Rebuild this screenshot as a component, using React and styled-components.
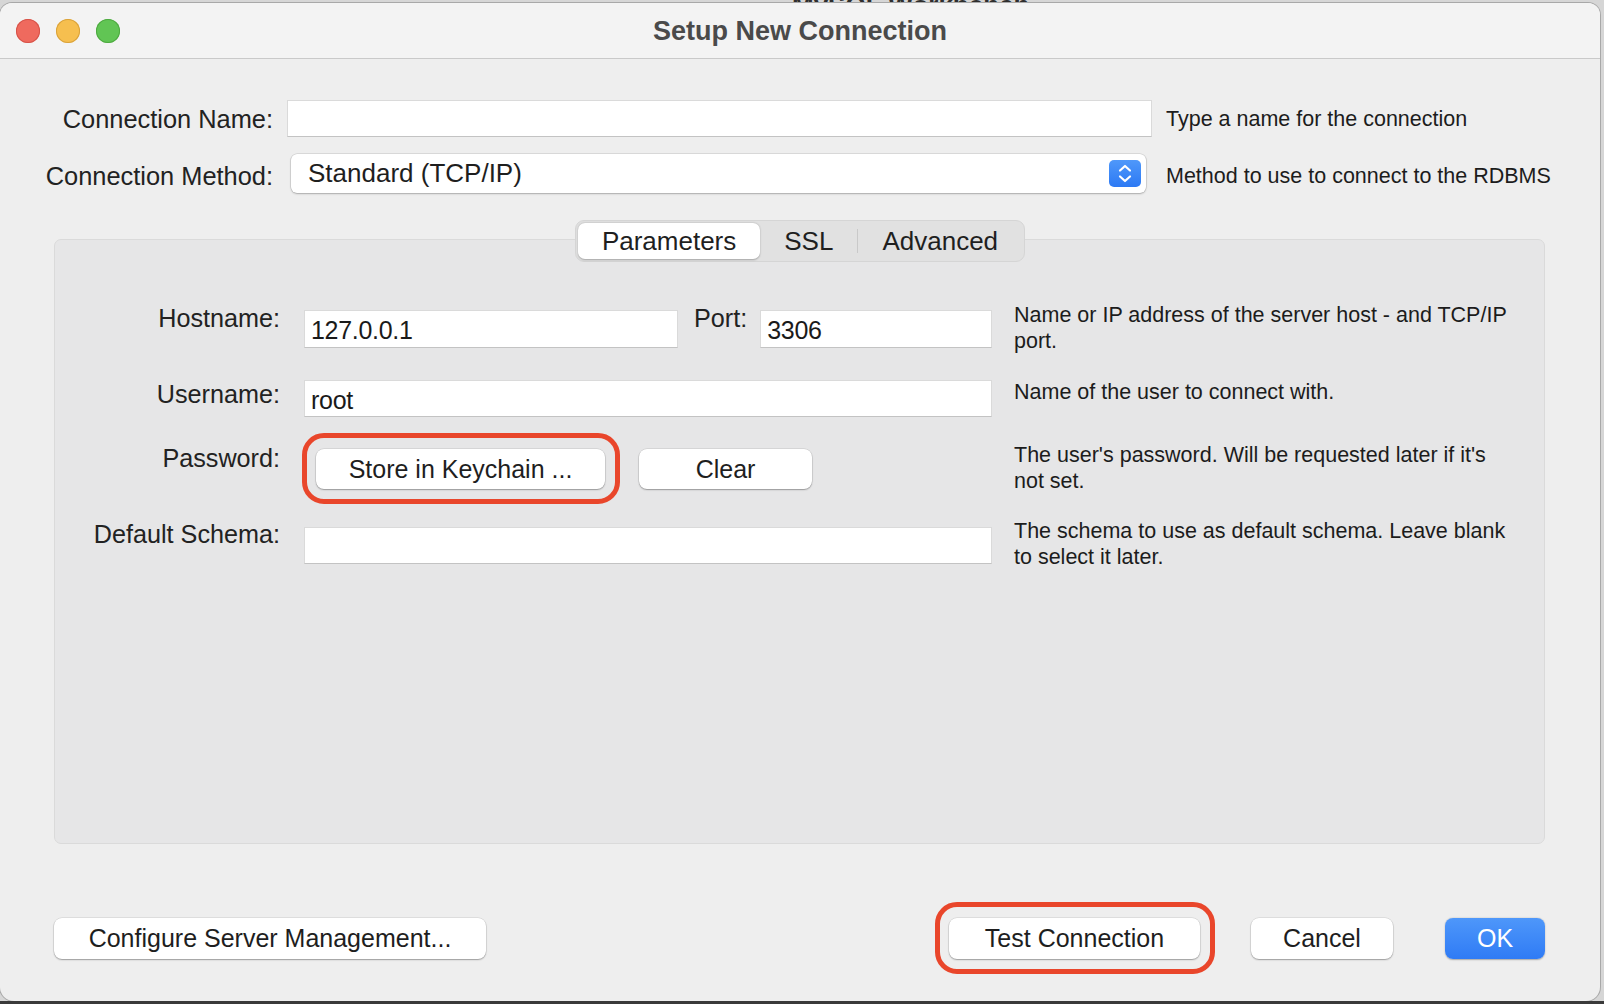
import React from 'react'
import styled, { createGlobalStyle } from 'styled-components'

const GlobalStyle = createGlobalStyle`
  html, body {
    margin: 0;
    padding: 0;
  }
  body {
    width: 1604px;
    height: 1004px;
    overflow: hidden;
    background: #d6d6d6;
    font-family: "Liberation Sans", Arial, sans-serif;
    color: #1f1f1f;
  }
  * {
    box-sizing: border-box;
  }
`

const Desktop = styled.div`
  width: 1604px;
  height: 1004px;
  display: flex;
  flex-direction: column;
  background: #d6d6d6;
`

const TopStrip = styled.div`
  height: 3px;
  overflow: hidden;
  padding-left: 792px;
`

// only the top of the letters of the app behind peeks out above the sheet
const BehindTitle = styled.span`
  display: block;
  margin-top: 1px;
  font-size: 26px;
  line-height: 8px;
  font-weight: 700;
  color: #2e2e2e;
  white-space: nowrap;
`

const Window = styled.div`
  width: 1600px;
  height: 998px;
  display: flex;
  flex-direction: column;
  background: #eeeeee;
  border-radius: 12px 12px 14px 14px;
  box-shadow: 0 0 0 1px #a8a8a8;
  overflow: hidden;
`

const BottomStrip = styled.div`
  flex: 1;
  background: #3a3a3a;
`

const TitleBar = styled.div`
  height: 56px;
  flex-shrink: 0;
  display: grid;
  grid-template-columns: 1fr auto 1fr;
  align-items: center;
  background: #f3f3f3;
  border-bottom: 1px solid #c9c9c9;
`

const Lights = styled.div`
  display: flex;
  gap: 16px;
  padding-left: 16px;
  padding-top: 1px;
`

const Light = styled.span`
  width: 24px;
  height: 24px;
  border-radius: 50%;
  background: ${p => p.$fill};
  box-shadow: inset 0 0 0 1px ${p => p.$edge};
`

const Title = styled.div`
  font-size: 27px;
  line-height: 30px;
  font-weight: 700;
  color: #4a4a4a;
`

const TopGrid = styled.div`
  display: grid;
  grid-template-columns: 273px 865px 1fr;
  column-gap: 14px;
  row-gap: 17px;
  align-items: center;
  padding-top: 41px;
`

const TopLabel = styled.div`
  text-align: right;
  font-size: 25.4px;
  line-height: 30px;
  color: #222222;
  padding-top: ${p => p.$nudge || 0}px;
`

const Hint = styled.div`
  font-size: 21.5px;
  line-height: 26px;
  color: #1c1c1c;
  padding-top: ${p => p.$nudge || 0}px;
`

const TextInput = styled.input`
  display: block;
  width: ${p => (p.$w ? `${p.$w}px` : '100%')};
  flex: ${p => (p.$w ? 'none' : '1')};
  height: ${p => p.$h || 37}px;
  margin: 0;
  padding: 3px 6px 0;
  border: 1px solid #dadada;
  border-bottom-color: #c3c3c3;
  background: #ffffff;
  font-family: inherit;
  font-size: 25px;
  letter-spacing: -0.3px;
  color: #1a1a1a;
  outline: none;
`

const Select = styled.div`
  height: 39px;
  margin: 0 6px 0 4px;
  display: flex;
  align-items: center;
  padding: 0 5px 0 17px;
  background: #ffffff;
  border-radius: 6px;
  box-shadow: 0 0 0 0.5px rgba(0, 0, 0, 0.16), 0 1px 2px rgba(0, 0, 0, 0.22);
  font-size: 26px;
  color: #1e1e1e;
`

const SelectValue = styled.span`
  flex: 1;
`

const TabsRow = styled.div`
  position: relative;
  z-index: 1;
  display: flex;
  justify-content: center;
  margin-top: 27px;
  margin-bottom: -23px;
`

const Segmented = styled.div`
  display: flex;
  align-items: center;
  height: 42px;
  padding: 2px;
  background: #e1e1e1;
  border: 1px solid #d5d5d5;
  border-radius: 9px;
`

const Segment = styled.div`
  height: 100%;
  display: flex;
  align-items: center;
  padding: 0 24px;
  font-size: 26px;
  color: #1f1f1f;
  border-radius: 7px;
  background: ${p => (p.$active ? '#ffffff' : 'transparent')};
  box-shadow: ${p => (p.$active ? '0 0.5px 2px rgba(0,0,0,0.28)' : 'none')};
`

const SegDivider = styled.span`
  width: 1px;
  height: 24px;
  background: #c9c9c9;
`

const Panel = styled.div`
  height: 605px;
  margin: 0 55px 0 54px;
  padding-top: 70px;
  display: flex;
  flex-direction: column;
  gap: 32px;
  background: #e6e6e7;
  border: 1px solid #dadada;
  border-radius: 7px;
`

const Row = styled.div`
  display: flex;
  align-items: flex-start;
  height: ${p => p.$h}px;
`

const FieldLabel = styled.div`
  width: 225px;
  flex-shrink: 0;
  text-align: right;
  font-size: 25.2px;
  line-height: 30px;
  color: #222222;
  margin-top: ${p => p.$shift}px;
`

const Field = styled.div`
  width: 688px;
  margin-left: 24px;
  flex-shrink: 0;
  display: flex;
  align-items: center;
  padding-left: ${p => p.$pad || 0}px;
`

const PortLabel = styled.div`
  align-self: flex-start;
  margin: -7px 13px 0 16px;
  font-size: 25.2px;
  line-height: 30px;
  color: #222222;
`

const RowHint = styled(Hint)`
  width: 500px;
  margin-left: 22px;
  margin-top: ${p => p.$shift}px;
`

const Highlight = styled.div`
  position: relative;
  display: inline-flex;
  margin-left: ${p => p.$ml || 0}px;
`

const Ring = styled.span`
  position: absolute;
  top: -16px;
  bottom: -15px;
  left: -14px;
  right: -15px;
  border: 5px solid #e9462b;
  border-radius: 22px;
  pointer-events: none;
`

const PushButton = styled.button`
  width: ${p => p.$w}px;
  height: ${p => p.$h || 41}px;
  margin: 0 0 0 ${p => p.$ml || 0}px;
  padding: 0;
  border: none;
  border-radius: 8px;
  background: #ffffff;
  box-shadow: 0 0 0 0.5px rgba(0, 0, 0, 0.13), 0 1px 1.5px rgba(0, 0, 0, 0.3);
  font-family: inherit;
  font-size: 25px;
  color: #1e1e1e;
  cursor: pointer;
  flex-shrink: 0;
`

const DefaultButton = styled(PushButton)`
  background: linear-gradient(#4e97fa, #2f7bf5);
  box-shadow: 0 0.5px 1.5px rgba(0, 0, 0, 0.3);
  color: #ffffff;
  font-weight: 500;
`

const Footer = styled.div`
  display: flex;
  align-items: center;
  margin-top: 74px;
  padding: 0 55px 0 54px;
`

const Spacer = styled.div`
  flex: 1;
`

const Stepper = () => (
  <svg width="32" height="27" viewBox="0 0 32 27">
    <defs>
      <linearGradient id="stepBlue" x1="0" y1="0" x2="0" y2="1">
        <stop offset="0" stopColor="#4f98fa" />
        <stop offset="1" stopColor="#2c79f4" />
      </linearGradient>
    </defs>
    <rect x="0" y="0" width="32" height="27" rx="5" fill="url(#stepBlue)" />
    <path d="M11 10.5 L16 6 L21 10.5" fill="none" stroke="#fff" strokeWidth="2.2" strokeLinecap="round" strokeLinejoin="round" />
    <path d="M11 16.5 L16 21 L21 16.5" fill="none" stroke="#fff" strokeWidth="2.2" strokeLinecap="round" strokeLinejoin="round" />
  </svg>
)

export default function App() {
  return (
    <Desktop>
      <GlobalStyle />
      <TopStrip>
        <BehindTitle>MySQL Workbench</BehindTitle>
      </TopStrip>
      <Window>
        <TitleBar>
          <Lights>
            <Light $fill="#ef6a5e" $edge="#d65349" />
            <Light $fill="#f6bf4f" $edge="#d9a23b" />
            <Light $fill="#61c554" $edge="#4ea940" />
          </Lights>
          <Title>Setup New Connection</Title>
          <div />
        </TitleBar>

        <TopGrid>
          <TopLabel>Connection Name:</TopLabel>
          <TextInput readOnly value="" />
          <Hint>Type a name for the connection</Hint>

          <TopLabel $nudge={5}>Connection Method:</TopLabel>
          <Select>
            <SelectValue>Standard (TCP/IP)</SelectValue>
            <Stepper />
          </Select>
          <Hint $nudge={5}>Method to use to connect to the RDBMS</Hint>
        </TopGrid>

        <TabsRow>
          <Segmented>
            <Segment $active>Parameters</Segment>
            <Segment>SSL</Segment>
            <SegDivider />
            <Segment>Advanced</Segment>
          </Segmented>
        </TabsRow>

        <Panel>
          <Row $h={38}>
            <FieldLabel $shift={-7}>Hostname:</FieldLabel>
            <Field>
              <TextInput readOnly value="127.0.0.1" $w={374} $h={38} />
              <PortLabel>Port:</PortLabel>
              <TextInput readOnly value="3306" $h={38} />
            </Field>
            <RowHint $shift={-8}>Name or IP address of the server host - and TCP/IP port.</RowHint>
          </Row>

          <Row $h={37}>
            <FieldLabel $shift={-1}>Username:</FieldLabel>
            <Field>
              <TextInput readOnly value="root" />
            </Field>
            <RowHint $shift={-1}>Name of the user to connect with.</RowHint>
          </Row>

          <Row $h={46}>
            <FieldLabel $shift={-6}>Password:</FieldLabel>
            <Field $pad={12}>
              <Highlight>
                <PushButton $w={289} $h={40}>Store in Keychain ...</PushButton>
                <Ring />
              </Highlight>
              <PushButton $w={173} $h={40} $ml={34}>Clear</PushButton>
            </Field>
            <RowHint $shift={-7}>The user's password. Will be requested later if it's not set.</RowHint>
          </Row>

          <Row $h={37}>
            <FieldLabel $shift={-8}>Default Schema:</FieldLabel>
            <Field>
              <TextInput readOnly value="" />
            </Field>
            <RowHint $shift={-9}>The schema to use as default schema. Leave blank to select it later.</RowHint>
          </Row>
        </Panel>

        <Footer>
          <PushButton $w={432}>Configure Server Management...</PushButton>
          <Spacer />
          <Highlight>
            <PushButton $w={251}>Test Connection</PushButton>
            <Ring />
          </Highlight>
          <PushButton $w={142} $ml={51}>Cancel</PushButton>
          <DefaultButton $w={100} $ml={52}>OK</DefaultButton>
        </Footer>
      </Window>
      <BottomStrip />
    </Desktop>
  )
}
